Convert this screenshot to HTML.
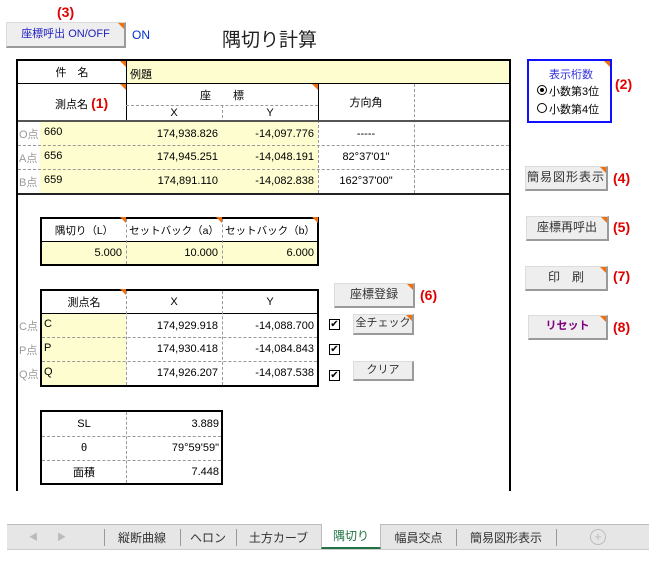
<!DOCTYPE html>
<html><head><meta charset="utf-8"><style>
*{margin:0;padding:0;box-sizing:border-box}
body{width:665px;height:561px;background:#fff;position:relative;overflow:hidden;font-family:"Liberation Sans","Noto Sans CJK JP",sans-serif;font-size:11px;color:#000}
.a{position:absolute}
.red{color:#e00000;font-weight:bold;font-size:14px}
.btn{position:absolute;background:#eeeeee;border:1px solid #dcdcdc;border-right:2px solid #9a9a9a;border-bottom:2px solid #9a9a9a;text-align:center;color:#333;font-size:12px}
.tri{position:absolute;right:0;top:0;width:0;height:0;border-left:6px solid transparent;border-top:6px solid #f07010}
.c{position:absolute;display:flex;align-items:center;justify-content:center}
.r{position:absolute;display:flex;align-items:center;justify-content:flex-end;padding-right:4px}
.y{background:#fdfdd0}
.gl{color:#999}
.hd{border-top:1px dashed #999}
.vd{border-left:1px dashed #999}
.cb{position:absolute;width:11px;height:11px;border:1px solid #000;font-size:10px;line-height:9px;text-align:center}
.tab{position:absolute;top:525px;height:24px;font-size:12px;color:#333;display:flex;align-items:center;justify-content:center}
.sep{position:absolute;top:529px;width:1px;height:17px;background:#999}
</style></head><body>
<div class="a red" style="left:57px;top:4px">(3)</div>
<div class="btn" style="left:6px;top:22px;width:120px;height:26px;line-height:22px;color:#2020c0;font-size:11px">座標呼出 ON/OFF<div class="tri"></div></div>
<div class="a" style="left:132px;top:28px;color:#0030d0;font-size:12px">ON</div>
<div class="a" style="left:222px;top:25px;font-size:19px;color:#222">隅切り計算</div>

<div class="a" style="left:16px;top:59px;width:2px;height:432px;background:#000"></div>
<div class="a" style="left:509px;top:59px;width:2px;height:432px;background:#000"></div>
<div class="a" style="left:16px;top:59px;width:495px;height:2px;background:#000"></div>
<div class="a y" style="left:126px;top:61px;width:383px;height:22px"></div>
<div class="a" style="left:18px;top:83px;width:491px;height:1px;background:#000"></div>
<div class="a" style="left:126px;top:61px;width:1px;height:59px;background:#000"></div>
<div class="c" style="left:18px;top:61px;width:108px;height:22px">件　名</div>
<div class="a" style="left:130px;top:66px">例題</div>
<div class="tri" style="left:120px;top:61px;right:auto"></div>
<div class="tri" style="left:120px;top:84px;right:auto"></div>
<div class="tri" style="left:312px;top:84px;right:auto"></div>
<div class="a" style="left:55px;top:95px">測点名 <span class="red" style="font-size:14px">(1)</span></div>
<div class="c" style="left:126px;top:84px;width:192px;height:21px">座　　標</div>
<div class="a hd" style="left:126px;top:105px;width:192px"></div>
<div class="c" style="left:126px;top:105px;width:96px;height:15px">X</div>
<div class="c" style="left:222px;top:105px;width:96px;height:15px">Y</div>
<div class="a vd" style="left:222px;top:105px;height:88px"></div>
<div class="a" style="left:318px;top:84px;width:1px;height:36px;background:#000"></div>
<div class="a vd" style="left:318px;top:120px;height:73px"></div>
<div class="a vd" style="left:414px;top:84px;height:109px"></div>
<div class="a vd" style="left:126px;top:120px;height:73px"></div>
<div class="c" style="left:318px;top:84px;width:96px;height:36px">方向角</div>
<div class="a" style="left:18px;top:120px;width:491px;height:2px;background:#555"></div>
<div class="a y" style="left:40px;top:122px;width:278px;height:71px"></div>
<div class="a hd" style="left:18px;top:145px;width:491px"></div>
<div class="a hd" style="left:18px;top:169px;width:491px"></div>
<div class="a" style="left:18px;top:193px;width:491px;height:2px;background:#222"></div>
<div class="a gl" style="left:19px;top:126px">O点</div><div class="a" style="left:44px;top:126px">660</div>
<div class="a gl" style="left:19px;top:150px">A点</div><div class="a" style="left:44px;top:150px">656</div>
<div class="a gl" style="left:19px;top:174px">B点</div><div class="a" style="left:44px;top:174px">659</div>
<div class="r" style="left:126px;top:122px;width:96px;height:23px">174,938.826</div>
<div class="r" style="left:126px;top:145px;width:96px;height:24px">174,945.251</div>
<div class="r" style="left:126px;top:169px;width:96px;height:24px">174,891.110</div>
<div class="r" style="left:222px;top:122px;width:96px;height:23px">-14,097.776</div>
<div class="r" style="left:222px;top:145px;width:96px;height:24px">-14,048.191</div>
<div class="r" style="left:222px;top:169px;width:96px;height:24px">-14,082.838</div>
<div class="c" style="left:318px;top:122px;width:96px;height:23px">-----</div>
<div class="c" style="left:318px;top:145px;width:96px;height:24px">82°37'01"</div>
<div class="c" style="left:318px;top:169px;width:96px;height:24px">162°37'00"</div>

<div class="a" style="left:40px;top:217px;width:279px;height:49px;border:2px solid #000"></div>
<div class="a y" style="left:42px;top:242px;width:275px;height:22px"></div>
<div class="a" style="left:42px;top:241px;width:275px;height:1px;background:#000"></div>
<div class="a vd" style="left:126px;top:219px;height:45px"></div>
<div class="a vd" style="left:222px;top:219px;height:45px"></div>
<div class="c" style="left:42px;top:219px;width:84px;height:22px;font-size:10.5px">隅切り（L）</div>
<div class="c" style="left:126px;top:219px;width:96px;height:22px;font-size:10.5px">セットバック（a）</div>
<div class="c" style="left:222px;top:219px;width:96px;height:22px;font-size:10.5px">セットバック（b）</div>
<div class="tri" style="left:120px;top:217px;right:auto"></div><div class="tri" style="left:216px;top:217px;right:auto"></div><div class="tri" style="left:312px;top:217px;right:auto"></div>
<div class="r" style="left:42px;top:242px;width:84px;height:22px">5.000</div>
<div class="r" style="left:126px;top:242px;width:96px;height:22px">10.000</div>
<div class="r" style="left:222px;top:242px;width:96px;height:22px">6.000</div>

<div class="a" style="left:40px;top:289px;width:279px;height:98px;border:2px solid #000"></div>
<div class="a" style="left:42px;top:313px;width:275px;height:1px;background:#000"></div>
<div class="a y" style="left:42px;top:314px;width:84px;height:71px"></div>
<div class="a vd" style="left:126px;top:291px;height:94px"></div>
<div class="a vd" style="left:222px;top:291px;height:94px"></div>
<div class="a hd" style="left:42px;top:337px;width:275px"></div>
<div class="a hd" style="left:42px;top:361px;width:275px"></div>
<div class="tri" style="left:120px;top:289px;right:auto"></div>
<div class="c" style="left:42px;top:291px;width:84px;height:22px">測点名</div>
<div class="c" style="left:126px;top:291px;width:96px;height:22px">X</div>
<div class="c" style="left:222px;top:291px;width:96px;height:22px">Y</div>
<div class="a gl" style="left:19px;top:318px">C点</div><div class="a" style="left:44px;top:318px">C</div>
<div class="a gl" style="left:19px;top:342px">P点</div><div class="a" style="left:44px;top:342px">P</div>
<div class="a gl" style="left:19px;top:366px">Q点</div><div class="a" style="left:44px;top:366px">Q</div>
<div class="r" style="left:126px;top:314px;width:96px;height:23px">174,929.918</div>
<div class="r" style="left:126px;top:337px;width:96px;height:24px">174,930.418</div>
<div class="r" style="left:126px;top:361px;width:96px;height:24px">174,926.207</div>
<div class="r" style="left:222px;top:314px;width:96px;height:23px">-14,088.700</div>
<div class="r" style="left:222px;top:337px;width:96px;height:24px">-14,084.843</div>
<div class="r" style="left:222px;top:361px;width:96px;height:24px">-14,087.538</div>
<div class="cb" style="left:329px;top:319px">✔</div>
<div class="cb" style="left:329px;top:344px">✔</div>
<div class="cb" style="left:329px;top:370px">✔</div>
<div class="btn" style="left:334px;top:283px;width:81px;height:25px;line-height:21px">座標登録<div class="tri"></div></div>
<div class="btn" style="left:353px;top:314px;width:61px;height:21px;line-height:17px;font-size:11px">全チェック<div class="tri"></div></div>
<div class="btn" style="left:353px;top:361px;width:61px;height:20px;line-height:16px;font-size:11px">クリア</div>
<div class="a red" style="left:420px;top:287px">(6)</div>

<div class="a" style="left:40px;top:410px;width:183px;height:75px;border:2px solid #000"></div>
<div class="a vd" style="left:126px;top:412px;height:71px"></div>
<div class="a hd" style="left:42px;top:436px;width:179px"></div>
<div class="a hd" style="left:42px;top:460px;width:179px"></div>
<div class="c" style="left:42px;top:412px;width:84px;height:24px">SL</div>
<div class="c" style="left:42px;top:436px;width:84px;height:24px">θ</div>
<div class="c" style="left:42px;top:460px;width:84px;height:23px">面積</div>
<div class="r" style="left:126px;top:412px;width:95px;height:24px;padding-right:2px">3.889</div>
<div class="r" style="left:126px;top:436px;width:95px;height:24px;padding-right:2px">79°59'59"</div>
<div class="r" style="left:126px;top:460px;width:95px;height:23px;padding-right:2px">7.448</div>

<div class="a" style="left:527px;top:59px;width:85px;height:64px;border:2px solid #1010ff"></div>
<div class="tri" style="left:604px;top:61px;right:auto"></div>
<div class="a" style="left:549px;top:66px;color:#3030e0">表示桁数</div>
<div class="a" style="left:537px;top:85px;width:10px;height:10px;border:1px solid #000;border-radius:50%"><div style="margin:2px;width:4px;height:4px;background:#000;border-radius:50%"></div></div>
<div class="a" style="left:549px;top:83px">小数第3位</div>
<div class="a" style="left:537px;top:103px;width:10px;height:10px;border:1px solid #000;border-radius:50%"></div>
<div class="a" style="left:549px;top:101px">小数第4位</div>
<div class="a red" style="left:615px;top:76px">(2)</div>
<div class="btn" style="left:525px;top:166px;width:83px;height:25px;line-height:21px;letter-spacing:1px">簡易図形表示<div class="tri"></div></div>
<div class="a red" style="left:613px;top:170px">(4)</div>
<div class="btn" style="left:526px;top:216px;width:83px;height:25px;line-height:21px">座標再呼出<div class="tri"></div></div>
<div class="a red" style="left:613px;top:219px">(5)</div>
<div class="btn" style="left:525px;top:266px;width:83px;height:25px;line-height:21px">印　刷<div class="tri"></div></div>
<div class="a red" style="left:613px;top:268px">(7)</div>
<div class="btn" style="left:528px;top:315px;width:80px;height:25px;line-height:21px;color:#800080;font-weight:bold;font-size:11px">リセット<div class="tri"></div></div>
<div class="a red" style="left:613px;top:319px">(8)</div>

<div class="a" style="left:7px;top:524px;width:642px;height:26px;background:#e6e6e6;border-top:1px solid #bbb;border-bottom:1px solid #ccc"></div>
<div class="a" style="left:29px;top:530px;color:#bbb;font-size:9px">◀</div>
<div class="a" style="left:57px;top:530px;color:#bbb;font-size:9px">▶</div>
<div class="sep" style="left:104px"></div><div class="sep" style="left:180px"></div><div class="sep" style="left:236px"></div><div class="sep" style="left:456px"></div><div class="sep" style="left:556px"></div>
<div class="tab" style="left:104px;width:76px">縦断曲線</div>
<div class="tab" style="left:180px;width:56px">ヘロン</div>
<div class="tab" style="left:236px;width:85px">土方カーブ</div>
<div class="tab" style="left:321px;width:60px;top:524px;height:25px;background:#fff;color:#217346;border-left:1px solid #bbb;border-right:1px solid #bbb;border-bottom:2px solid #217346">隅切り</div>
<div class="tab" style="left:381px;width:75px">幅員交点</div>
<div class="tab" style="left:456px;width:100px">簡易図形表示</div>
<div class="a" style="left:590px;top:529px;width:16px;height:16px;border:1px solid #bbb;border-radius:50%;color:#bbb;text-align:center;line-height:14px;font-size:13px">+</div>
</body></html>
